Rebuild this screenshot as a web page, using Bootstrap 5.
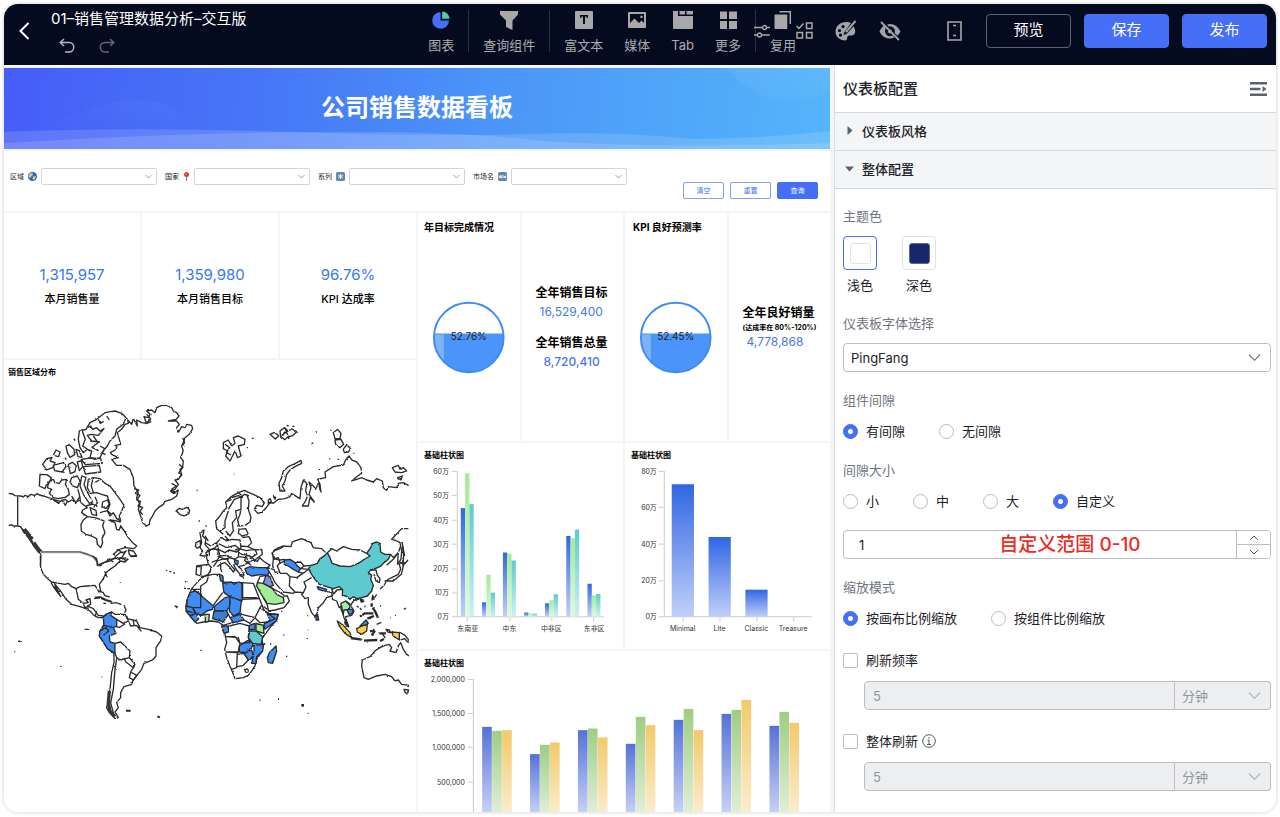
<!DOCTYPE html>
<html lang="zh-CN">
<head>
<meta charset="utf-8">
<meta name="viewport" content="width=device-width, initial-scale=1">
<title>01-销售管理数据分析-交互版</title>
<link rel="stylesheet" href="https://cdn.jsdelivr.net/npm/bootstrap@5.3.0/dist/css/bootstrap.min.css">
<style>
:root{--blue:#446ff6;--ink:#1d2129;--muted:#70757f;--line:#c3c6cb}
body{font-family:"Inter","Noto Sans CJK SC",sans-serif;font-size:13px;line-height:20px;color:var(--ink);background:#fff}
.app{height:100vh;padding:4px 4px 5px}
.frame{border-radius:14px;box-shadow:0 0 4px rgba(0,0,0,.2)}
/* top bar */
.topbar{height:61px;background:#050b1f;padding:0 9px 8px 14px;color:#fff}
.topbar .plain,.tool{background:none;border:0;padding:0;color:#a9abb0;line-height:18px}
.topbar svg{display:block}
.doc{padding-left:21px}
.doc-title{font-size:15px;line-height:22px}
.tool{display:flex;flex-direction:column;align-items:center;gap:6px;padding-top:3px}
.toolset{gap:21px;padding:0 14px}
.sep{width:1px;height:42px;background:#2c3142}
.topbar .tuck{margin-left:-2px}
.looks{gap:22px;margin:0 46px 0 22px}
.topbtn{width:85px;height:34px;padding:0;font-size:15px;border-radius:4px;color:#fff;background:var(--blue);border:1px solid var(--blue)}
.topbtn.ghost{background:transparent;border-color:#5d6270}
.btnset{gap:13px;padding-left:24px}
/* dashboard */
.board{background:#f4f5f6;padding:3px 4px 0 0;gap:2px;min-width:0}
.tile{background:#fff;min-width:0}
.banner{height:81px;background:linear-gradient(97deg,#465df7 0%,#467af7 35%,#4b96f8 60%,#55b5fa 100%);color:#fff;font-size:24px;font-weight:700}
.filters{height:60px;padding:17px 12px 0 6px;font-size:7px;line-height:17px;gap:8px}
.filters .form-select{width:116px;height:17px;min-height:0;padding:0 14px 0 4px;font-size:7px;line-height:15px;border:1px solid #d3d5d8;border-radius:2px;background-size:7px 7px;background-position:right 4px center}
.filters .actions{gap:6px;padding-top:14px}
.minibtn{width:41px;height:17px;padding:0;font-size:7px;line-height:15px;border-radius:2px;border:1px solid #7f9df9;color:var(--blue);background:#fff}
.minibtn.solid{background:var(--blue);border-color:var(--blue);color:#fff}
.grid-gap{gap:2px}
.thirds,.quarters,.halves{display:grid;grid-template-columns:repeat(3,minmax(0,1fr))}
.quarters{grid-template-columns:repeat(4,minmax(0,1fr))}
.halves{grid-template-columns:repeat(2,minmax(0,1fr))}
.kpis{flex:0 0 145px}
.kpi-num{font-size:15px;line-height:22px;color:#3577ee}
.kpi-name{font-size:11px;line-height:18px;font-weight:500;color:#000;padding-top:4px}
.gauges{flex:0 0 228px}
.bars{flex:0 0 206px}
.tile-title{font-size:8px;line-height:20px;font-weight:700;color:#000;padding:2px 6px 0}
.tile-title.big{font-size:10px;line-height:24px}
.sums{padding-left:14px}
.sum-name{font-size:12px;line-height:20px;font-weight:700;color:#000}
.sum-num{font-size:12px;line-height:18px;color:#4877e6;padding-left:4px}
.sum-note{font-size:7px;line-height:10px;font-weight:700;color:#000}
.chart text{font-size:7px;fill:#333}
.map-land{fill:none;stroke:#2b2b2e;stroke-width:4;stroke-linejoin:round}
/* settings */
.side{flex:0 0 442px;border-left:1px solid #dcdee0;background:#fff}
.side-head{height:47px;padding:0 9px 0 8px;font-size:15px;font-weight:500}
.fold{height:38px;padding:0 10px 2px;gap:8px;background:#f4f5f6;border:0;border-top:1px solid #d5d8db;font-weight:500;text-align:left;color:var(--ink)}
.side-body{border-top:1px solid #d5d8db;padding:17px 5px 20px 8px}
.caption{color:var(--muted);margin-bottom:10px;line-height:20px;font-size:13px}
.block{margin-top:18px}
.block-lg{margin-top:20px}
.swatches{gap:25px}
.swatch{width:34px;gap:5px}
.swatch i{width:34px;height:34px;border:1px solid #dfe1e4;border-radius:4px;display:flex;align-items:center;justify-content:center}
.swatch i::before{content:"";width:21px;height:21px;border-radius:3px;border:1px solid #e2e3e5;background:#fff}
.swatch.dark i::before{background:#17276b;border-color:#5b678f}
.swatch input:checked + i{border-color:var(--blue)}
.choices{gap:34px;min-height:22px}
.choice{gap:8px;min-height:22px}
.choice .form-check-input{width:15px;height:15px;margin:0;border:1px solid #b9bcc2;flex:none}
.choice .form-check-input[type=checkbox]{border-radius:2px}
.choice .form-check-input:checked{background-color:var(--blue);border-color:var(--blue);background-image:radial-gradient(circle,#fff 2px,transparent 3px);background-size:15px 15px}
.side .form-select,.side .form-control{height:29px;min-height:0;font-size:13px;line-height:20px;border-color:#babdc3;color:var(--ink)}
.form-select{background-image:url("data:image/svg+xml,%3Csvg xmlns='http://www.w3.org/2000/svg' viewBox='0 0 14 14' fill='none' stroke='%235c626d' stroke-width='1.2'%3E%3Cpath d='M1 4l6 6 6-6'/%3E%3C/svg%3E");background-size:13px 13px;background-position:right 9px center}
.form-select:disabled{background-image:url("data:image/svg+xml,%3Csvg xmlns='http://www.w3.org/2000/svg' viewBox='0 0 14 14' fill='none' stroke='%23a5a9b0' stroke-width='1.2'%3E%3Cpath d='M1 4l6 6 6-6'/%3E%3C/svg%3E")}
.side .form-select{padding:3px 30px 3px 7px;border-radius:4px}
.side .form-control{padding:3px 8px;border-radius:4px}
.side .num{padding-left:15px}
.steps{width:35px;height:29px;margin-left:-1px;border:1px solid #babdc3;border-radius:0 4px 4px 0;overflow:hidden}
.steps button{border:0;background:#fff;padding:0;flex:1;display:flex;align-items:center;justify-content:center;color:#4e5560}
.steps button + button{border-top:1px solid #babdc3}
.note{left:0;right:0;top:0;padding-left:26px;text-align:center;font-size:19px;line-height:29px;font-weight:500;color:#ee2b20;pointer-events:none}
.indent{padding:10px 0 0 21px}
.side .form-control:disabled,.side .form-select:disabled{background-color:#edeef0;color:#8f959e}
.side .unit{flex:0 0 96px}
</style>
</head>
<body>
<div class="app">
<div class="frame d-flex flex-column h-100 overflow-hidden bg-white">

<header class="topbar d-flex align-items-center flex-shrink-0">
  <button class="plain" aria-label="返回"><svg width="12" height="20" viewBox="0 0 12 20" fill="none" stroke="#fff" stroke-width="2"><path d="M10.500 2 2.500 10l8 8"/></svg></button>
  <div class="doc flex-grow-1">
    <div class="doc-title text-nowrap">01–销售管理数据分析–交互版</div>
    <div class="d-flex ps-1 pt-2 gap-4">
      <button class="plain" aria-label="撤销"><svg class="ms-1" width="16" height="16" viewBox="0 0 16 16" fill="none" stroke="#b4b6ba" stroke-width="1.500"><path d="M5 1 1.200 4.500 5 8M1.500 4.500H10a4.700 4.700 0 0 1 0 9.500H6"/></svg></button>
      <button class="plain" aria-label="重做"><svg width="16" height="16" viewBox="0 0 16 16" fill="none" stroke="#66676c" stroke-width="1.500"><path d="M11 1l3.800 3.500L11 8M14.500 4.500H6A4.700 4.700 0 0 0 6 14h4"/></svg></button>
    </div>
  </div>
  <nav class="d-flex align-items-center">
    <div class="toolset d-flex">
      <button class="tool"><svg width="20" height="20" viewBox="0 0 20 20"><path fill="#446ff6" d="M9.500 2v8.500H18A8.400 8.400 0 1 1 9.500 2z"/><path fill="#52cdb0" d="M11.200 1.500A7.300 7.300 0 0 1 18.500 8.800h-7.300z"/></svg><span>图表</span></button>
    </div>
    <span class="sep"></span>
    <div class="toolset d-flex">
      <button class="tool"><svg width="20" height="20" viewBox="0 0 20 20"><path fill="#a8a8aa" d="M1 1h18v3.500l-5.500 6V20L7 17v-6.500L1 4.500z"/></svg><span>查询组件</span></button>
    </div>
    <span class="sep"></span>
    <div class="toolset d-flex">
      <button class="tool"><svg width="20" height="20" viewBox="0 0 20 20"><path fill="#a8a8aa" fill-rule="evenodd" d="M2 1h16a1 1 0 0 1 1 1v16a1 1 0 0 1-1 1H2a1 1 0 0 1-1-1V2a1 1 0 0 1 1-1zm4 4v3h1.500V6.500H9V14h2V6.500h1.500V8H14V5z"/></svg><span>富文本</span></button>
      <button class="tool"><svg width="20" height="20" viewBox="0 0 20 20"><path fill="#a8a8aa" fill-rule="evenodd" d="M2 2h16a1 1 0 0 1 1 1v14a1 1 0 0 1-1 1H2a1 1 0 0 1-1-1V3a1 1 0 0 1 1-1zM3 4v9l4.500-4.500 4.500 4.500 2.500-2.500L17 13V4zM14.500 5.500a1.300 1.300 0 1 1-.01 0z"/></svg><span>媒体</span></button>
      <button class="tool"><svg width="20" height="20" viewBox="0 0 20 20" fill="#a8a8aa"><path d="M0 1h5v5h15v12a1 1 0 0 1-1 1H1a1 1 0 0 1-1-1zM6.500 1h5.500v3.500H6.500zM13.500 1H20v3.500h-6.500z"/></svg><span>Tab</span></button>
      <button class="tool"><svg width="20" height="20" viewBox="0 0 20 20" fill="#a8a8aa"><path d="M2 1.500h7v7.500H2zM11 1.500h8v7.500h-8zM2 11h7v8H2zM11 11h8v8h-8z"/></svg><span>更多</span></button>
    </div>
    <span class="sep"></span>
    <button class="plain tuck" aria-label="参数"><svg width="16" height="16" viewBox="0 0 16 16" fill="none" stroke="#a8a8aa" stroke-width="1.300"><path d="M0 4.500h8M13 4.500h3M0 12h3M8 12h8"/><circle cx="10.500" cy="4.500" r="2"/><circle cx="5.500" cy="12" r="2"/></svg></button>
    <button class="tool"><svg width="20" height="20" viewBox="0 0 20 20"><path fill="#a8a8aa" d="M2 4.500h11.500a.8.8 0 0 1 .8.8V18a1 1 0 0 1-1 1H2.500a1 1 0 0 1-1-1V5z"/><path fill="none" stroke="#a8a8aa" stroke-width="1.500" d="M6.500 1.700h10.800V14"/></svg><span>复用</span></button>
    <button class="plain" aria-label="批量选择"><svg width="17" height="17" viewBox="0 0 17 17" fill="none" stroke="#a8a8aa" stroke-width="1.500"><path d="M.5 4l2.500 2.500L7.500 1.500M10.500 1h5.500v5.500h-5.500zM1 10.500h5.500V16H1zM10.500 10.500h5.500V16h-5.500z"/></svg></button>
    <div class="looks d-flex">
    <button class="plain" aria-label="主题"><svg width="22" height="22" viewBox="0 0 22 22"><path fill="#a0a3a9" fill-rule="evenodd" d="M11 2C5.500 2 .5 6 .5 11.500S5 20.500 10 20.500c3 0 1.500-3.500 3-4.500s6 .5 7-3c.7-2.500-.3-5-1.500-6.500l-7 7.500-3 1 1-3 6.500-9A10 10 0 0 0 11 2zM8 5a1.600 1.600 0 1 0 .01 0zM4.500 9a1.600 1.600 0 1 0 .01 0zM5.500 13.500a1.600 1.600 0 1 0 .01 0z"/><path d="M20.500 1 11 12" stroke="#a0a3a9" stroke-width="2"/></svg></button>
    <button class="plain" aria-label="隐藏"><svg width="22" height="22" viewBox="0 0 22 22"><path fill="#a0a3a9" d="M5 5.500C3 7 1.500 9 .5 11.500c2 4.500 6 7 10.500 7 1.500 0 3-.3 4.500-1l-2-2a5 5 0 0 1-6.800-6.800zM8 4.500c1-.3 2-.5 3-.5 4.500 0 8.500 3 10.500 7.500-.8 1.700-1.800 3-3 4.200l-2.800-2.800A5 5 0 0 0 9.600 6.500z"/><path d="M2 2l18 18" stroke="#a0a3a9" stroke-width="2"/><circle cx="11" cy="11.500" r="2" fill="#a0a3a9"/></svg></button>
    </div>
    <button class="plain" aria-label="移动端"><svg width="15" height="20" viewBox="0 0 15 20" fill="none" stroke="#a8a8aa" stroke-width="1.600"><path d="M1 1h13v18H1zM6 4.500h3M6 14.500h3"/></svg></button>
    <div class="btnset d-flex">
      <button class="btn topbtn ghost">预览</button>
      <button class="btn topbtn">保存</button>
      <button class="btn topbtn">发布</button>
    </div>
  </nav>
</header>

<div class="d-flex flex-grow-1 overflow-hidden">
<main class="board flex-grow-1 d-flex flex-column overflow-hidden">
  <h1 class="banner position-relative d-flex align-items-center justify-content-center m-0 flex-shrink-0 overflow-hidden">
    <svg class="position-absolute top-0 start-0 w-100 h-100" viewBox="12 204 2478 243" preserveAspectRatio="none" fill="#fff"><defs><linearGradient id="haze" x1="0" y1="0" x2="0" y2="1"><stop offset="0" stop-color="#fff" stop-opacity=".06"/><stop offset="1" stop-color="#fff" stop-opacity="0"/></linearGradient></defs><path opacity=".14" d="M12 395Q400 380 850 395T1580 402T2080 417Q2300 415 2490 393V447H12z"/><path opacity=".14" d="M12 430Q400 405 850 397T1580 418T2490 430V447H12z"/><path fill="url(#haze)" d="M120 400Q300 290 430 300T560 400zM2180 204Q2260 300 2360 300T2490 270V204z"/></svg>
    <span class="position-relative">公司销售数据看板</span>
  </h1>

  <form class="tile filters d-flex align-items-start flex-shrink-0" onsubmit="return false">
    <div class="d-flex align-items-center"><label for="f1">区域</label><svg class="mx-1" width="9" height="9" viewBox="0 0 18 18"><circle cx="9" cy="9" r="9" fill="#2c62c4"/><path fill="#cfd477" d="M3 3l6-1 1 4-4 3-1 4-4-4zM11 8l5 1-2 5-4 2-1-4z"/><path fill="#0d2f73" opacity=".5" d="M16 3a9 9 0 0 1-12 13 9 9 0 0 0 12-13z"/></svg><select id="f1" class="form-select"><option></option></select></div>
    <div class="d-flex align-items-center"><label for="f2">国家</label><svg class="mx-1" width="7" height="9" viewBox="0 0 14 18"><path stroke="#888" stroke-width="2" d="M7 8v10"/><circle cx="7" cy="5" r="5" fill="#df3a31"/><circle cx="6" cy="4" r="1.500" fill="#f6a29b"/></svg><select id="f2" class="form-select"><option></option></select></div>
    <div class="d-flex align-items-center"><label for="f3">系列</label><svg class="mx-1" width="9" height="9" viewBox="0 0 18 18"><rect width="18" height="18" rx="3" fill="#6786a8"/><path stroke="#fff" stroke-width="2" d="M9 4v10M4.500 6.500l9 5M13.500 6.500l-9 5"/></svg><select id="f3" class="form-select"><option></option></select></div>
    <div class="d-flex align-items-center"><label for="f4">市场名</label><svg class="mx-1" width="9" height="9" viewBox="0 0 18 18"><rect width="18" height="18" rx="3" fill="#6786a8"/><path fill="none" stroke="#fff" stroke-width="1.500" d="M2 12V7l3 5V7M9.500 7.500h-3v4h3M6.500 9.500h2.500M11 7l1.200 5 1.300-4 1.300 4L16 7"/></svg><select id="f4" class="form-select"><option></option></select></div>
    <div class="actions d-flex ms-auto"><button class="minibtn">清空</button><button class="minibtn">重置</button><button class="minibtn solid">查询</button></div>
  </form>

  <div class="halves grid-gap flex-grow-1 overflow-hidden">
    <section class="d-flex flex-column grid-gap overflow-hidden">
      <div class="kpis thirds grid-gap text-center">
        <div class="tile d-flex flex-column justify-content-center"><div class="kpi-num">1,315,957</div><div class="kpi-name">本月销售量</div></div>
        <div class="tile d-flex flex-column justify-content-center"><div class="kpi-num">1,359,980</div><div class="kpi-name">本月销售目标</div></div>
        <div class="tile d-flex flex-column justify-content-center"><div class="kpi-num">96.76%</div><div class="kpi-name">KPI 达成率</div></div>
      </div>
      <div class="tile flex-grow-1 overflow-hidden">
        <div class="tile-title px-1">销售区域分布</div>
        <svg class="d-block w-100" viewBox="4 381 412 431" role="img" aria-label="销售区域分布地图">
          <defs>
            <filter id="rough" x="0" y="0" width="1" height="1" color-interpolation-filters="sRGB"><feTurbulence type="fractalNoise" baseFrequency=".3" numOctaves="2" seed="4"/><feDisplacementMap in="SourceGraphic" scale="2" xChannelSelector="R" yChannelSelector="G"/></filter>
            <clipPath id="view"><path d="M8 385H409V800H8z"/></clipPath>
          </defs>
          <g clip-path="url(#view)">
          <g filter="url(#rough)">
          <!-- arctic Canada, Greenland, Iceland, British Isles -->
          <g class="map-land" transform="translate(0 395) scale(.3333)">
            <path d="M331 170L345 162 352 150 345 148 362 145 358 130 352 110 365 100 375 85 385 82 383 72 395 85 400 68 412 90 410 72 425 80 440 82 432 62 445 65 450 55 440 45 455 42 465 50 470 35 485 28 500 28 515 35 520 45 530 50 537 60 528 70 505 75 530 75 538 85 530 95 536 108 545 92 555 95 560 85 575 88 578 98 568 115 555 125 550 140 545 150 550 165 542 185 550 195 548 215 540 220 545 235 535 250 525 252 535 265 525 280 512 285 520 292 535 282 530 300 515 310 495 316 490 325 475 335 465 345 458 360 450 372 448 385 440 390 428 380 422 360 415 340 420 325 410 305 415 290 402 270 400 245 390 220 370 208 350 208 335 190 355 185 335 175z"/>
            <path d="M440 55l12 14-14 14 16-6M548 125l6 14-6 10M538 205l10 10-12 16 10 6-14 12M515 262l14 8-14 10 10 12-14-6M402 278l14 4-10 10 14 6-10 14 12 4-8 14 14 4-8 12 8 10"/>
            <path d="M528 345l10-8 8 3 15-6 8 8-2 10-15 8-12-4-5-6z"/>
            <path d="M258 100L270 80 290 70 315 50 345 45 365 52 378 65 370 85 350 100 345 120 330 135 322 150 310 165 300 185 285 190 270 185 275 165 262 160 250 170 240 155 235 130 238 105zM262 95L272 90 278 100 290 95 300 105 312 98 295 118 275 115 262 118 275 135 300 138M245 100L256 130 248 150 270 165M280 120l14 20-18 14 20 10M320 60l8 12M295 70l6 12 10-6M300 150l14 8-8 12 10 6"/>
            <path d="M120 235L140 236 154 245 148 260 138 268 135 278 118 270zM148 255L160 250 165 260 178 262 185 252 200 250 196 265 205 280 208 296 195 304 175 308 160 305 148 292 155 280 142 275zM215 245L232 240 240 255 232 275 218 270 210 258zM245 240L258 245 252 265 260 285 278 318 268 322 250 295 240 270zM232 275l6 20 4 25"/>
            <path d="M128 205L140 188 156 184 150 195 165 200 158 215 140 222zM160 208l30-8 8 12-12 16-22-4zM160 178l8-16 12 6-4 14zM198 150l10-4 14 14 2 16-14 8-8-14zM228 160l10 4 8 20-12-2zM205 205l12-6 12 10-4 18-14 6zM232 198l12-4 4 18-10 12zM244 190l30-4 28 2 4 14-50 4zM250 212l48-4 4 20-46 6zM222 128l3 6M195 185l4 6M170 225l24 4"/>
            <path d="M265 250L280 245 300 248 315 262 330 270 345 290 360 310 372 328 365 345 358 360 362 375 350 368 340 350 330 360 322 345 330 325 322 300 305 295 290 290 270 292 262 275zM278 250L274 270 280 290M284 260l14-8M285 302l8 18-12 14M308 318l14-6 6 12-10 14-12-6zM270 335l18 8 2 16-14-4zM258 330l20-6 14 8M300 350l22-6 14 12"/>
            <path d="M26 292L38 294 45 299 62 300 70 303 75 298 85 302 92 295 105 298 112 293 118 297 130 300 145 305 155 308 165 312 180 316 195 310 205 318 215 312 228 318 240 312M160 312l16 10 10-10 10 16 6-12M215 300l12 20M240 300l-14 24M243 320L262 335 248 342 245 350 262 362 250 372 243 385 244 405 258 415 275 420 290 428 292 445 302 455 308 440 306 428 315 410 308 390 312 375 300 370 285 365 262 362"/>
            <path d="M325 372L345 380 350 400 358 402 362 390 375 408 385 425 398 440 410 450 402 458 375 455 355 462 340 475 345 482 360 470 375 470 365 485 330 490 320 495 297 510M385 462L400 465 410 480 395 482 388 475zM360 485l18 8 6-4M350 460l20 10 10-6M330 372l16 2 16 4"/>
            <path d="M26 388L35 386 40 390 53 390 62 392 72 410 85 425 95 440 105 455 118 468 123 478 121 510M66 398L90 418 98 440 126 466"/>
            <path stroke-width="13" stroke="#34363a" d="M72 400L96 430M100 440L120 468"/>
            <path d="M600 410L612 402 608 420 618 430 615 445 628 460 628 478 610 480 600 478 608 465 600 455 605 440zM588 440l12-6 2 15-10 8-6-6zM592 281v3M598 373v4M617 388l3 4"/>
          </g>
          <!-- northern Eurasia -->
          <g class="map-land" transform="translate(205 395) scale(.3333)">
            <path d="M55 415L35 398 32 375 45 360 55 345 65 335 62 318 75 305 85 298 100 290 118 283 132 290 145 295 165 305 178 320 172 332 155 328 148 340 158 352 172 348 188 330 195 318 205 322 220 310 240 308 255 302 260 293 285 308 288 275 295 252 305 262 302 285 308 300 300 318 292 330 310 330 315 305 328 318 312 295 318 275 312 258 325 270 332 280 340 262 348 290 345 265 338 250 362 245 360 228 385 212 415 207 422 192 432 180 440 192 455 198 468 215 470 232 458 240 440 255 455 250 470 245 485 252 505 258 515 248 532 255 535 275 545 283 550 272 575 275 580 262 595 260 610 268"/>
            <path d="M70 340L88 310 110 302 118 295 132 300M45 405L60 395 60 375 70 345M62 405L75 420 85 405 82 380 95 365 92 345 108 340 105 355 98 372 102 390 120 388 135 378 138 365 130 340 132 315 125 295M66 315l14-4M80 305l20-6 14 6M100 290l10 8M108 300v38"/>
            <path d="M225 285L222 262 230 245 235 225 250 212 270 203 288 193 290 202 270 212 255 222 245 235 240 255 232 270 240 285z"/>
            <path d="M55 140L70 132 80 150 90 142 85 125 100 120 120 130 118 145 100 150 108 180 98 185 90 165 75 195 62 180 68 165 55 158zM60 145l14 10-10 14 14 8"/>
            <path d="M195 115l14-6 12 10-10 10zM225 105l14-10 10 10 12-6 14 8-12 12-14 4-10 8-12-10zM230 118l20-14M240 95l12 34M245 88l6 2M262 90l6 2"/>
            <path d="M385 110L398 100 408 112 405 128 390 128zM390 132L408 130 416 145 405 155 392 145zM415 160L425 146 437 158 430 168 418 170zM376 102h4M332 108h4M320 141l5 1M444 170l4 2M374 187v3M343 219v3M398 190h4M140 127h6M125 155h4M88 233v2"/>
            <path d="M562 215L580 208 585 220 595 215 605 225 590 230 570 228zM578 245L592 240 588 252zM190 312l6-4 4 12-10 4zM206 302l6 2-2 6z"/>
            <path d="M610 398L590 398 560 430 575 435 585 440 590 465 588 490 578 505 580 470 565 490 545 508M592 440l4 40-2 30"/>
            <path d="M202 470L215 458 235 450 258 452 262 438 290 428 318 440 325 455 350 458 362 470M202 470L205 488 225 492 240 490"/>
            <path d="M35 440L50 425 65 435 80 430 105 432 108 455 95 468 72 462 60 470 40 460zM102 400L122 398 130 415 112 420 100 412zM112 425L132 422 140 440 128 452 108 450M128 452L150 462 170 460 172 475 150 492 135 480 110 475 98 466M0 440L18 450 35 440M5 465L25 458 40 462 38 480 60 490 80 482M0 420L10 435M60 420l10 12M125 470l-6 24 20 14"/>
          </g>
          <!-- United States to Cape Horn -->
          <g class="map-land" transform="translate(0 555) scale(.3333)">
            <path d="M121 0L122 35 130 55 145 70 155 78 178 82 195 85 205 82 215 92 228 98 240 92 262 90 285 88 297 108 302 105 298 85 310 68 318 50 330 40 345 30 360 15 375 18 385 8M277 0L290 8 292 28 310 20 330 15 345 5 360 12M326 8l14 10M355 8l24-2M314 46l8 18"/>
            <path d="M152 78L160 92 175 110 182 122 172 102 163 82 185 110 198 130 215 145 240 152 258 158 270 165 282 178 295 185 310 185M228 98L232 115 235 130 250 142 265 140 258 132 270 128 272 145 262 150 280 158 295 178 310 180M250 145l6 10 12-4M290 165l-4 14"/>
            <path stroke-width="7" d="M162 92l16 22M282 126l18-2 18 8 18 6"/>
            <path d="M332 142L350 140 364 146M295 105l14 4 6 10 14 4M372 148l6 14-4 8M310 142h8M361 78v2M498 43h4M508 47h6M520 51h5M254 220h10M56 254l6 4M43 287h3M181 331h2M305 363h2M602 283h2M524 150l8 2-4 4M390 0h20"/>
            <path d="M310 182L318 175 335 168 345 175 375 175 382 188 410 195 420 215 445 220 470 228 485 240 482 255 468 275 468 300 458 312 432 322 425 340 408 362 398 375 395 385 372 392 362 410 362 425 350 440 355 455 345 468 355 485 345 488 328 470 320 455 325 430 330 400 335 350 342 320 342 292 325 280 312 262 298 240 302 222 312 205z"/>
            <path fill="#3f8cf6" d="M310 182L325 172 335 168 332 178 350 190 350 210 340 215 348 232 328 240 330 258 345 262 345 292 322 278 308 255 298 240 300 225 312 208zM300 225L318 215 326 225 310 238M312 208L340 215"/>
            <path d="M350 190L370 202 385 195 380 180M348 212L358 214 375 204M385 195L392 210 408 208 420 215M400 194l2 14M412 212l12 14M345 262L362 258 375 270 390 285 388 305 360 312 350 305 345 292M388 305L405 325 400 335 378 318 372 306M392 348L410 358 400 372 388 365zM404 330L392 348M350 308L345 340 340 400 332 440 340 470"/>
            <path stroke-width="10" stroke="#34363a" d="M328 405L325 440 330 465 345 482"/>
            <path stroke-width="6" d="M378 464h14M472 481l8 3"/>
          </g>
          <!-- Europe, Africa, Asia, Australia -->
          <g class="map-land" transform="translate(180 545) scale(.3333)">
            <path d="M35 128L60 100 75 90 100 85 118 85 128 90 128 108 155 110 185 110 220 112 235 150 245 175 255 198 265 202 295 205 290 222 270 245 255 265 245 280 250 300 245 318 230 340 225 360 215 375 205 388 190 395 165 398 160 385 150 360 140 335 134 310 140 290 135 265 128 250 130 238 115 228 95 225 70 228 50 232 35 215 20 195 18 180 22 160 30 140z"/>
            <g fill="#3f8cf6">
              <path d="M30 140L45 135 62 145 62 185 38 185 20 180 22 160zM62 148L100 180 98 190 80 195 65 208 45 202 38 185 62 185zM18 180L38 185 50 205 55 220 45 228 30 210 18 195zM20 195l18 4M30 208l14-4M118 85L128 90 130 108 122 105z"/>
              <path d="M128 112L155 108 162 115 175 108 186 112 186 165 150 152 132 140zM102 182L135 155 150 152 150 175 140 195 105 195zM150 152L184 165 180 200 160 210 148 195zM150 215L180 205 192 222 160 230zM125 240L145 240 145 258 132 262zM262 205L295 205 288 225 255 250 252 235 270 222zM208 238L225 232 225 250 208 250z"/>
              <path d="M178 300L200 285 220 282 218 300 200 320 178 318zM222 298L250 295 248 315 230 332 228 352 215 352 222 320zM192 322L215 312 220 330 205 342zM268 320L288 300 290 315 278 352 265 350 262 335z"/>
              <path d="M195 68L210 62 235 65 262 65 268 78 262 88 240 86 215 90 200 82zM313 42L330 40 345 50 350 58 362 68 355 78 340 70 325 60 313 55zM412 122L440 130 438 137 415 130zM163 40L175 45 172 58 165 52zM500 190L518 190 520 200 508 206zM408 208l6 2 2 12-8 0zM540 240L558 222 565 232 552 242zM494 228l8 4 4 10-8-2z"/>
            </g>
            <path fill="#3a7ecf" d="M102 195L140 195 145 205 130 228 112 222 98 218z"/>
            <g fill="#a3ec98"><path d="M76 205L88 205 86 226 76 228zM228 232L250 238 252 262 228 255zM232 110L250 112 275 125 290 145 310 155 312 170 285 175 262 172 250 155 238 135 230 120zM483 172L497 165 510 178 508 190 492 192 490 205 483 190z"/></g>
            <path fill="#7b90de" d="M258 88L270 92 280 118 268 122 250 112z"/>
            <g fill="#5dcad0"><path d="M208 255L228 255 248 272 244 295 218 292 205 275zM385 68L395 58 412 52 420 38 435 28 442 20 450 35 456 52 480 60 510 62 535 52 550 42 570 30 560 22 572 5 578-8 590-12 600-8 602 18 615 25 632 25 625 40 612 50 600 62 585 68 572 72 565 80 575 88 572 100 580 118 575 135 562 150 545 155 530 158 520 152 510 160 498 150 487 148 488 132 478 122 460 128 440 122 418 115 405 100 395 85z"/></g>
            <g fill="#fbd13f"><path d="M472 225L490 238 510 260 515 275 495 262 478 240zM530 248L545 240 562 235 560 255 545 265 532 258zM635 258L658 260 658 282 640 270zM618 250l10 2 4 8-8-2z"/></g>
            <path d="M62 145L35 128M38 130l24 0M62 148V120L80 108 85 92M128 140L100 178M188 112V155H232M186 160L240 158M240 185L262 200 285 218 265 228 240 230 225 215 240 185 245 178M180 200L185 205 225 215 210 232 192 222M58 208l18-2M148 240L180 232 208 240 205 275 210 290 180 292 165 272 138 272M138 272L175 275 180 292 175 318 136 318M136 318L172 320 170 365 155 370M172 325L192 322 205 342 190 358 172 362M145 205L150 215M130 238L150 232 160 230"/>
            <circle cx="200" cy="374" r="5"/>
            <path d="M262 176L265 195 285 192 312 185 328 165 322 150 310 150M250 155L262 176M245 178L262 190M232 110L240 92 258 88M268 122L282 130 298 138 312 148"/>
            <path d="M50 60L85 55 95 65 85 85 70 92 48 85zM50 62h14l-2 26M85 55L80 35 78 20 100 8 115 12 120 30 112 42 92 50M100 62L112 45 125 40 140 38 150 55 165 72 160 78 148 62 135 50 122 54 112 62M120 30L140 28 150 35 165 40 175 32 200 35 205 50 190 58 175 62 185 70 192 88 180 85 170 72 160 55M100 8L118-6 140 5 165-2 178 8 175 32M165 12l12-4 22 6 26-4 6 14-22 14M122 54v14l4 10M112 85v6M178 88l14 6"/>
            <path d="M205 50L220 42 232 46 240 35 250 45 270 58 262 65M262 65L280 70M280 40L295 35 300 50 292 60 300 80 285 78 278 60zM300 52L313 45M300 82L320 82 330 92 328 120 345 138 340 142 310 138 298 125 285 110 278 95 268 78M330 92L350 95 372 80 385 70M345 138L370 140 378 122 372 108 395 95M345 50L362 48 372 60 362 68M362 68L385 70M355 78l15 4M372 60l24-2M280 15L300 8 310 2M275 20l10 18"/>
            <path d="M370 140L365 145 375 158 385 155 385 175 395 200 405 212 412 200 415 185 430 170 440 155 455 150 458 160 470 165 478 185 485 180 488 200 492 215 500 232 506 242 500 225 497 212 515 208 522 195 512 178 520 165 530 158M440 137l14 2 4 12M455 128l6 16 10-12 18-2M497 165l14 10"/>
            <path d="M442 20L455 8 470 15 490 2 515 10 540 12 560 22M572 72L588 72 592 88 600 98 598 110 588 105 582 85M632 25L640 35 655 20 662 0M615 105L635 95 655 85 662 70 658 55 668 45 670 60 664 85 640 105zM660 50l14 4 10-12M668 0l6 30M618 108l-6 10M610 120l-10 10M590 145l-6 10M578 148l4 10-6 4zM540 158l10 4-6 6z"/>
            <path stroke-width="7" d="M540 212l14-10M552 202l28 0M578 185l8 12 8 18M562 218l20-8M570 256l14-4M575 268l10-14M512 276L545 281M552 284l40-2M600 285l12-6M598 262h20M575 172v10"/>
            <path d="M658 258L675 268 688 285M662 282l12-4 12 12M520 168l12-6M545 168l8-2M600 180h3M630 215h2M645 208h3M672 190l6-4M530 180l6 4M540 186l4 6M552 180l4 4M590 235l14-6M606 262l10 14"/>
            <path d="M547 342L570 332 585 315 600 305 615 298 628 295 635 305 630 315 648 320 655 300 662 290 670 310 680 325 688 330M547 342L545 360 552 395 565 400 590 390 615 385 635 392 645 405 655 402 665 415 688 418M672 430l14 2-4 12-6-4z"/>
            <path d="M383 208v3M383 250v3M382 276v3M310 267h3M318 331h4M303 196h4M61 313h3M238 463h3M294 460h3M383 502h3M15 107h4M12 127h6M22 128h8M270 294h4M252 292l4 4"/>
            <path stroke-width="8" d="M364 478h8"/>
          </g>
          </g>
          <!-- straight land borders -->
          <g class="map-land" transform="translate(0 395) scale(.3333)"><path d="M53 300V388M125 468H240L262 475 280 482 292 498 294 510"/></g>
          </g>
        </svg>
      </div>
    </section>

    <section class="d-flex flex-column grid-gap overflow-hidden">
      <div class="gauges quarters grid-gap">
        <div class="tile"><div class="tile-title big text-nowrap">年目标完成情况</div>
          <svg class="d-block w-100" viewBox="417 239 102 180"><defs><clipPath id="c1"><circle cx="468" cy="338" r="35"/></clipPath></defs><g clip-path="url(#c1)"><path fill="#4b94f9" d="M430 334h76v44h-76z"/><path fill="#7fb2fb" d="M430 335h13v26h-13z"/></g><circle cx="468" cy="338" r="35" fill="none" stroke="#3f8cf8" stroke-width="2"/><text x="468" y="341" font-size="10" text-anchor="middle" fill="#222">52.76%</text></svg></div>
        <div class="tile sums d-flex flex-column justify-content-center text-nowrap"><div class="sum-name">全年销售目标</div><div class="sum-num mb-2">16,529,400</div><div class="sum-name pt-1">全年销售总量</div><div class="sum-num fw-medium ps-2">8,720,410</div></div>
        <div class="tile"><div class="tile-title big text-nowrap ps-2">KPI 良好预测率</div>
          <svg class="d-block w-100" viewBox="417 239 102 180"><g clip-path="url(#c1)"><path fill="#4b94f9" d="M430 334h76v44h-76z"/><path fill="#7fb2fb" d="M430 335h13v26h-13z"/></g><circle cx="468" cy="338" r="35" fill="none" stroke="#3f8cf8" stroke-width="2"/><text x="468" y="341" font-size="10" text-anchor="middle" fill="#222">52.45%</text></svg></div>
        <div class="tile sums d-flex flex-column justify-content-center text-nowrap"><div class="sum-name">全年良好销量</div><div class="sum-note">(达成率在 80%-120%)</div><div class="sum-num">4,778,868</div></div>
      </div>
      <div class="bars halves grid-gap">
        <div class="tile"><div class="tile-title">基础柱状图</div>
          <svg class="chart d-block w-100" viewBox="417 464 206 180">
            <defs>
              <linearGradient id="g-blue" x2="0" y2="1"><stop stop-color="#2f66e4"/><stop offset="1" stop-color="#c2d0f8"/></linearGradient>
              <linearGradient id="g-green" x2="0" y2="1"><stop stop-color="#a2ec96"/><stop offset="1" stop-color="#e0f9dc"/></linearGradient>
              <linearGradient id="g-teal" x2="0" y2="1"><stop stop-color="#5dcbd0"/><stop offset="1" stop-color="#cdf0f1"/></linearGradient>
              <linearGradient id="g-indigo" x2="0" y2="1"><stop stop-color="#5571d8"/><stop offset="1" stop-color="#cbd5f6"/></linearGradient>
              <linearGradient id="g-leaf" x2="0" y2="1"><stop stop-color="#9fcd83"/><stop offset="1" stop-color="#e2f0d9"/></linearGradient>
              <linearGradient id="g-gold" x2="0" y2="1"><stop stop-color="#f3c96b"/><stop offset="1" stop-color="#fbeed0"/></linearGradient>
            </defs>
            <path fill="none" stroke="#ccc" d="M456.500 470V617M451 470.500h5M451 494.500h5M451 519.500h5M451 543.500h5M451 568.500h5M451 592.500h5M451 616.500H604M466.500 617v4M509.500 617v4M551.500 617v4M593.500 617v4"/>
            <g text-anchor="end"><text x="448" y="473">60万</text><text x="448" y="497">50万</text><text x="448" y="522">40万</text><text x="448" y="546">30万</text><text x="448" y="571">20万</text><text x="448" y="595">10万</text><text x="448" y="619">0万</text></g>
            <g text-anchor="middle"><text x="467" y="631">东南亚</text><text x="509" y="631">中东</text><text x="551" y="631">中非区</text><text x="594" y="631">东非区</text></g>
            <g id="bars-region" transform="translate(415 440) scale(.3333)"></g>
          </svg></div>
        <div class="tile"><div class="tile-title">基础柱状图</div>
          <svg class="chart d-block w-100" viewBox="624 464 206 180">
            <path fill="none" stroke="#ccc" d="M663.500 470V617M658 470.500h5M658 506.500h5M658 543.500h5M658 580.500h5M658 616.500H812M682.500 617v4M719.500 617v4M756.500 617v4M793.500 617v4"/>
            <g text-anchor="end"><text x="656" y="473">80万</text><text x="656" y="509">60万</text><text x="656" y="546">40万</text><text x="656" y="583">20万</text><text x="656" y="619">0万</text></g>
            <g text-anchor="middle"><text x="682" y="631">Minimal</text><text x="719" y="631">Lite</text><text x="756" y="631">Classic</text><text x="793" y="631">Treasure</text></g>
            <g id="bars-series" transform="translate(415 440) scale(.3333)"></g>
          </svg></div>
      </div>
      <div class="tile flex-grow-1 overflow-hidden"><div class="tile-title">基础柱状图</div>
        <svg class="chart d-block w-100" viewBox="417 672 413 160">
          <path fill="none" stroke="#ccc" d="M472.500 678V816M467 678.500h5M467 712.500h5M467 746.500h5M467 781.500h5M467 815.500H820"/>
          <g text-anchor="end"><text x="464" y="681">2,000,000</text><text x="464" y="715">1,500,000</text><text x="464" y="749">1,000,000</text><text x="464" y="784">500,000</text></g>
          <g id="bars-total" transform="translate(415 440) scale(.3333)"></g>
        </svg></div>
    </section>
  </div>
</main>

<aside class="side overflow-auto">
  <div class="side-head d-flex align-items-center justify-content-between"><span>仪表板配置</span>
    <button class="border-0 bg-transparent p-0" aria-label="收起"><svg class="d-block" width="17" height="14" viewBox="0 0 17 14" fill="#5c626d"><path d="M0 0h17v2.500H0zM0 5.800h10.500v2.500H0zM0 11.500h17V14H0zM12.500 4l4 3-4 3z"/></svg></button></div>
  <button class="fold w-100 d-flex align-items-center"><svg width="9" height="9" viewBox="0 0 9 9" fill="#5c626d"><path d="M2.500 0 7.500 4.500 2.500 9z"/></svg>仪表板风格</button>
  <button class="fold w-100 d-flex align-items-center"><svg width="9" height="9" viewBox="0 0 9 9" fill="#5c626d"><path d="M0 2.500h9L4.500 7.500z"/></svg>整体配置</button>
  <form class="side-body" onsubmit="return false">
    <div class="caption">主题色</div>
    <div class="swatches d-flex">
      <label class="swatch d-flex flex-column align-items-center text-nowrap"><input class="visually-hidden" type="radio" name="theme" checked><i></i>浅色</label>
      <label class="swatch dark d-flex flex-column align-items-center text-nowrap"><input class="visually-hidden" type="radio" name="theme"><i></i>深色</label>
    </div>
    <div class="block"><label class="caption d-block" for="font">仪表板字体选择</label><select id="font" class="form-select"><option>PingFang</option></select></div>
    <div class="block"><div class="caption">组件间隙</div>
      <div class="choices d-flex"><label class="choice d-flex align-items-center"><input class="form-check-input" type="radio" name="gap" checked>有间隙</label><label class="choice d-flex align-items-center"><input class="form-check-input" type="radio" name="gap">无间隙</label></div></div>
    <div class="block"><div class="caption">间隙大小</div>
      <div class="choices d-flex"><label class="choice d-flex align-items-center"><input class="form-check-input" type="radio" name="size">小</label><label class="choice d-flex align-items-center"><input class="form-check-input" type="radio" name="size">中</label><label class="choice d-flex align-items-center"><input class="form-check-input" type="radio" name="size">大</label><label class="choice d-flex align-items-center"><input class="form-check-input" type="radio" name="size" checked>自定义</label></div></div>
    <div class="block position-relative d-flex"><input class="form-control num rounded-end-0" type="text" inputmode="numeric" value="1" aria-label="自定义间隙">
      <div class="steps d-flex flex-column flex-shrink-0"><button type="button" aria-label="增加"><svg width="10" height="6" viewBox="0 0 10 6" fill="none" stroke="currentColor"><path d="M1 5l4-4 4 4"/></svg></button><button type="button" aria-label="减少"><svg width="10" height="6" viewBox="0 0 10 6" fill="none" stroke="currentColor"><path d="M1 1l4 4 4-4"/></svg></button></div>
      <span class="note position-absolute text-nowrap">自定义范围 0-10</span></div>
    <div class="block"><div class="caption">缩放模式</div>
      <div class="choices d-flex"><label class="choice d-flex align-items-center"><input class="form-check-input" type="radio" name="zoom" checked>按画布比例缩放</label><label class="choice d-flex align-items-center"><input class="form-check-input" type="radio" name="zoom">按组件比例缩放</label></div></div>
    <div class="block-lg"><label class="choice d-flex align-items-center"><input class="form-check-input" type="checkbox">刷新频率</label>
      <div class="indent d-flex"><input class="form-control rounded-end-0" value="5" disabled aria-label="刷新频率"><select class="form-select unit rounded-start-0 border-start-0" disabled aria-label="单位"><option>分钟</option></select></div></div>
    <div class="block-lg"><label class="choice d-flex align-items-center"><input class="form-check-input" type="checkbox"><span class="d-flex align-items-center gap-1">整体刷新<svg width="14" height="14" viewBox="0 0 14 14" fill="none" stroke="#4e5560"><circle cx="7" cy="7" r="6.300"/><path d="M5.500 6H7v4.500M5 10.500h4M7 3v1.500"/></svg></span></label>
      <div class="indent d-flex"><input class="form-control rounded-end-0" value="5" disabled aria-label="整体刷新"><select class="form-select unit rounded-start-0 border-start-0" disabled aria-label="单位"><option>分钟</option></select></div></div>
  </form>
</aside>
</div>
</div>
</div>
<script src="https://cdn.jsdelivr.net/npm/bootstrap@5.3.0/dist/js/bootstrap.bundle.min.js"></script>
<script>
// tops: bar tops for each group, in chart units measured from the top of the plot
function drawBars(id, x0, step, pitch, width, base, fills, tops) {
  const host = document.getElementById(id);
  tops.forEach((group, g) => group.forEach((top, i) => {
    const r = document.createElementNS('http://www.w3.org/2000/svg', 'rect');
    r.setAttribute('x', x0 + Math.round(g * step) + i * pitch);
    r.setAttribute('y', top);
    r.setAttribute('width', width);
    r.setAttribute('height', base - top);
    r.setAttribute('fill', `url(#${fills[i]})`);
    host.appendChild(r);
  }));
}
drawBars('bars-region', 135, 63.6, 13, 13, 529, ['g-blue', 'g-green', 'g-teal'],
  [[202,97,190],[486,403,457],[336,339,360],[517,520,520],[489,480,462],[286,293,267],[430,465,461]]);
drawBars('bars-series', 768, 111, 0, 67, 530, ['g-blue'], [[130],[289],[448]]);
drawBars('bars-total', 199, 144, 30, 29, 1126, ['g-indigo', 'g-leaf', 'g-gold'],
  [[858,870,868],[940,912,905],[868,863,890],[909,828,853],[837,804,868],[819,807,777],[855,813,846]]);
</script>
</body>
</html>
